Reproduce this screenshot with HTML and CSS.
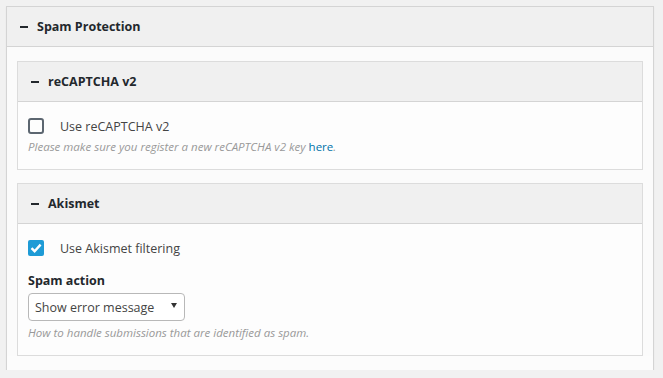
FILE: index.html
```html
<!DOCTYPE html>
<html lang="en">
<head>
    <meta charset="UTF-8">
    <title>Spam Protection</title>
    <link rel="stylesheet" href="styles.css">
</head>
<body>

<div class="panel outer">
    <div class="panel-head"><span class="toggle"></span>Spam Protection</div>
    <div class="panel-body">

        <!-- reCAPTCHA -->
        <div class="panel inner">
            <div class="panel-head"><span class="toggle"></span>reCAPTCHA v2</div>
            <div class="panel-body">
                <label class="check">
                    <span class="box"></span>
                    Use reCAPTCHA v2
                </label>
                <p class="desc">Please make sure you register a new reCAPTCHA v2 key <a href="#">here</a>.</p>
            </div>
        </div>

        <!-- Akismet -->
        <div class="panel inner">
            <div class="panel-head"><span class="toggle"></span>Akismet</div>
            <div class="panel-body">
                <label class="check">
                    <span class="box checked">
                        <svg width="12" height="10" viewBox="0 0 12 10"><path d="M1.5 5.2 L4.6 8.2 L10.6 1.6" fill="none" stroke="#fff" stroke-width="2.4"/></svg>
                    </span>
                    Use Akismet filtering
                </label>
                <div class="field-title">Spam action</div>
                <div class="select">
                    <span>Show error message</span>
                    <span class="arrow"></span>
                </div>
                <p class="desc">How to handle submissions that are identified as spam.</p>
            </div>
        </div>

    </div>
</div>

</body>
</html>
```

FILE: styles.css
```css
body {
    margin: 0;
    padding: 6px 9px 0 6px;
    background-color: #f1f1f1;
    font-family: "Open Sans", "Noto Sans", sans-serif;
    font-size: 12.5px;
    color: #444;
}

.panel {
    border: 1px solid #d4d4d4;
    background-color: #fcfcfc;
}

.outer {
    border-bottom: none;
    padding-bottom: 14px;
    box-shadow: 0 1px 2px rgba(0, 0, 0, 0.04);
}

.panel-head {
    display: flex;
    align-items: center;
    height: 39px;
    padding-left: 13px;
    background-color: #f0f0f0;
    border-bottom: 1px solid #d4d4d4;
    font-weight: bold;
    color: #23282d;
    font-size: 12.5px;
}

.toggle {
    display: inline-block;
    width: 8px;
    height: 2px;
    background-color: #23282d;
    margin-right: 9px;
}

.outer > .panel-body {
    padding: 14px 10px 0 10px;
    background-color: #fbfbfb;
}

.inner {
    margin-bottom: 13px;
    border-color: #dcdcdc;
}

.inner:last-child {
    margin-bottom: 0;
}

.inner .panel-head {
    border-color: #d4d4d4;
}

.inner .panel-body {
    padding: 15px 10px 15px 10px;
    background-color: #fdfdfd;
}

.check {
    display: flex;
    align-items: center;
    height: 18px;
    font-size: 12.5px;
    color: #444;
}

.box {
    box-sizing: border-box;
    width: 16px;
    height: 16px;
    border: 2px solid #5c6670;
    border-radius: 3px;
    margin-right: 16px;
    display: flex;
    align-items: center;
    justify-content: center;
}

.box.checked {
    border: none;
    background-color: #1e9bd6;
    border-radius: 2px;
}

.desc {
    margin: 4px 0 0 0;
    font-size: 11.5px;
    font-style: italic;
    color: #999;
}

.desc a {
    color: #0073aa;
    text-decoration: none;
    font-style: normal;
}

.field-title {
    margin-top: 15px;
    font-weight: bold;
    color: #23282d;
}

.select {
    box-sizing: border-box;
    width: 157px;
    height: 28px;
    margin-top: 4px;
    border: 1px solid #b8b8b8;
    border-radius: 4px;
    background-color: #fff;
    display: flex;
    align-items: center;
    justify-content: space-between;
    padding: 0 7px 0 6px;
    color: #444;
}

.arrow {
    width: 0;
    height: 0;
    border-left: 3px solid transparent;
    border-right: 3px solid transparent;
    border-top: 5px solid #333;
    margin-top: -4px;
}
```
